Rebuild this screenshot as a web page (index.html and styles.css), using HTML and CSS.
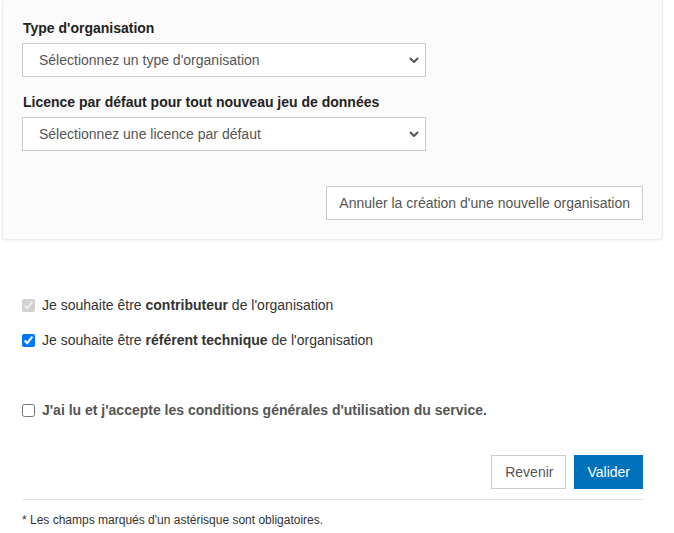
FILE: index.html
```html
<!DOCTYPE html>
<html lang="fr">
<head>
<meta charset="utf-8">
<title>Organisation</title>
<link rel="stylesheet" href="styles.css">
</head>
<body>
<div class="page">
  <div class="card">
    <div class="field">
      <label class="field-label" for="type">Type d'organisation</label>
      <div class="select-wrap">
        <select id="type" class="select"><option>Sélectionnez un type d'organisation</option></select>
        <svg class="chev" width="10" height="6" viewBox="0 0 10 6"><path d="M1 1 L5 5 L9 1" fill="none" stroke="#555" stroke-width="2"/></svg>
      </div>
    </div>
    <div class="field field-second">
      <label class="field-label" for="lic">Licence par défaut pour tout nouveau jeu de données</label>
      <div class="select-wrap">
        <select id="lic" class="select"><option>Sélectionnez une licence par défaut</option></select>
        <svg class="chev" width="10" height="6" viewBox="0 0 10 6"><path d="M1 1 L5 5 L9 1" fill="none" stroke="#555" stroke-width="2"/></svg>
      </div>
    </div>
    <div class="card-actions">
      <button class="btn btn-default">Annuler la création d'une nouvelle organisation</button>
    </div>
  </div>

  <div class="form">
    <label class="check check-first"><input type="checkbox" checked disabled> <span>Je souhaite être <b>contributeur</b> de l'organisation</span></label>
    <label class="check check-second"><input type="checkbox" checked> <span>Je souhaite être <b>référent technique</b> de l'organisation</span></label>
    <label class="check check-terms"><input type="checkbox"> <span>J'ai lu et j'accepte les conditions générales d'utilisation du service.</span></label>
    <div class="actions">
      <button class="btn btn-default btn-back">Revenir</button>
      <button class="btn btn-primary">Valider</button>
    </div>
    <hr class="sep">
    <p class="note">* Les champs marqués d'un astérisque sont obligatoires.</p>
  </div>
</div>
</body>
</html>
```

FILE: styles.css
```css
html, body {
  margin: 0;
  padding: 0;
  background: #fff;
}
body {
  font-family: "Liberation Sans", Arial, sans-serif;
  color: #333;
  font-size: 14px;
}
.page {
  width: 674px;
}
.card {
  margin-left: 2px;
  width: 621px;
  padding: 18px 19px 19px 19px;
  background: #fbfbfb;
  border: 1px solid #ececec;
  border-top: 0;
  border-radius: 0 0 4px 4px;
  box-shadow: 0 1px 2px rgba(0,0,0,0.05);
}
.field {
  display: flex;
  flex-direction: column;
  width: 404px;
}
.field-second {
  margin-top: 15px;
}
.field-label {
  font-weight: bold;
  font-size: 14px;
  line-height: 20px;
  color: #222;
  margin-bottom: 5px;
  padding-left: 1px;
}
.select-wrap {
  position: relative;
}
.select {
  appearance: none;
  -webkit-appearance: none;
  display: block;
  width: 404px;
  height: 34px;
  margin: 0;
  padding: 0 30px 0 16px;
  border: 1px solid #ccc;
  border-radius: 0;
  background: #fff;
  font-family: "Liberation Sans", Arial, sans-serif;
  font-size: 14px;
  color: #555;
}
.chev {
  position: absolute;
  right: 7px;
  top: 14px;
}
.card-actions {
  display: flex;
  justify-content: flex-end;
  margin-top: 35px;
}
.btn {
  height: 34px;
  padding: 0 12px;
  font-family: "Liberation Sans", Arial, sans-serif;
  font-size: 14px;
  border-radius: 0;
  margin: 0;
  cursor: pointer;
}
.btn-back {
  padding: 0 12px 0 13px;
}
.btn-default {
  background: #fff;
  border: 1px solid #ccc;
  color: #555;
}
.btn-primary {
  background: #0072bc;
  border: 1px solid #0072bc;
  color: #fff;
}
.form {
  padding: 0 31px 0 22px;
}
.check {
  display: flex;
  align-items: center;
  line-height: 20px;
  font-size: 14px;
  color: #333;
}
.check input {
  margin: 0 7px 0 0;
  width: 13px;
  height: 13px;
}
.check-first {
  margin-top: 55px;
}
.check-second {
  margin-top: 15px;
}
.check-terms {
  margin-top: 50px;
  font-weight: bold;
  color: #555;
}
.actions {
  display: flex;
  justify-content: flex-end;
  gap: 8px;
  margin-top: 35px;
}
.sep {
  border: 0;
  border-top: 1px solid #e5e5e5;
  margin: 10px 0 0 0;
}
.note {
  margin: 12px 0 0 0;
  font-size: 12px;
  line-height: 16px;
  color: #333;
}
```
